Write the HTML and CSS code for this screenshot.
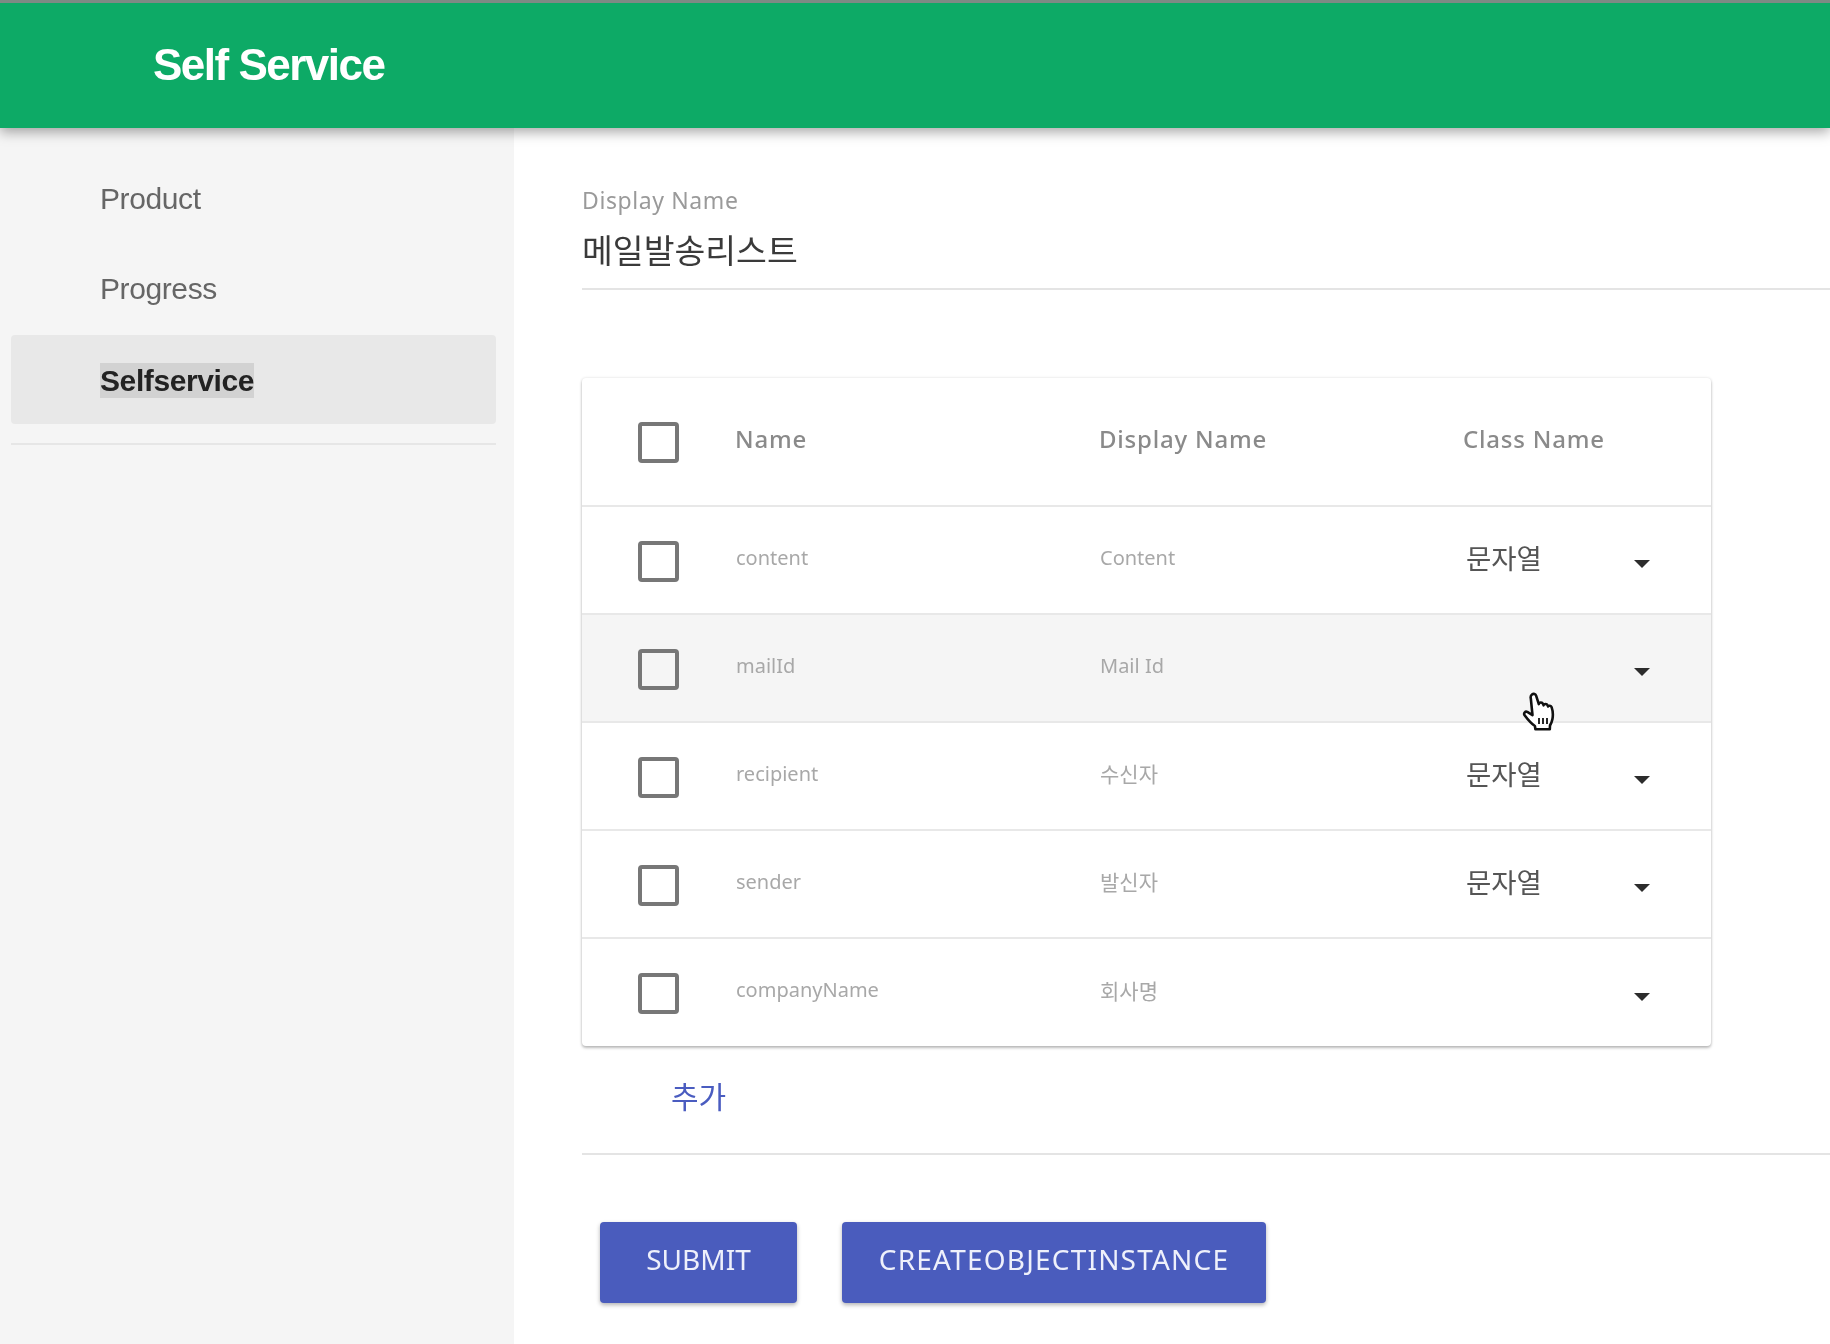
FILE: index.html
```html
<!DOCTYPE html>
<html lang="ko">
<head>
    <meta charset="UTF-8">
    <meta name="viewport" content="width=device-width, initial-scale=1.0">
    <title>Self Service</title>
    <link rel="stylesheet" href="styles.css">
</head>
<body>
    <header class="topbar">
        <div class="brand">Self Service</div>
    </header>
    <div class="layout">
        <nav class="sidebar">
            <a class="nav-item">Product</a>
            <a class="nav-item">Progress</a>
            <a class="nav-item active"><span class="selected">Selfservice</span></a>
            <div class="nav-divider"></div>
        </nav>
        <main class="content">
            <div class="field">
                <label class="field-label">Display Name</label>
                <div class="field-value">메일발송리스트</div>
            </div>
            <div class="table-card">
                <table>
                    <thead>
                        <tr>
                            <th class="col-check"><span class="check"></span></th>
                            <th class="col-name">Name</th>
                            <th class="col-display">Display Name</th>
                            <th>Class Name</th>
                        </tr>
                    </thead>
                    <tbody>
                        <tr>
                            <td><span class="check"></span></td>
                            <td>content</td>
                            <td>Content</td>
                            <td><div class="select"><span>문자열</span><i class="caret"></i></div></td>
                        </tr>
                        <tr class="hover">
                            <td><span class="check"></span></td>
                            <td>mailId</td>
                            <td>Mail Id</td>
                            <td><div class="select"><span></span><i class="caret"></i></div></td>
                        </tr>
                        <tr>
                            <td><span class="check"></span></td>
                            <td>recipient</td>
                            <td class="ko">수신자</td>
                            <td><div class="select"><span>문자열</span><i class="caret"></i></div></td>
                        </tr>
                        <tr>
                            <td><span class="check"></span></td>
                            <td>sender</td>
                            <td class="ko">발신자</td>
                            <td><div class="select"><span>문자열</span><i class="caret"></i></div></td>
                        </tr>
                        <tr>
                            <td><span class="check"></span></td>
                            <td>companyName</td>
                            <td class="ko">회사명</td>
                            <td><div class="select"><span></span><i class="caret"></i></div></td>
                        </tr>
                    </tbody>
                </table>
                <svg class="cursor" width="36" height="42" viewBox="0 0 36 42">
                    <path d="M11 3.5c1.6-1.2 3.6-.4 4.2 1.4l2.6 8.2c.2-1.800 3.400-2.200 4.200-.2l.6 1.400c.4-1.600 3.200-1.800 4 0l.5 1.200c.6-1.200 2.900-1 3.500.6 1.300 3.700 1.600 8 .8 12.200-.5 2.600-1.400 4.400-2.400 6.200l-.2 3.700H14.400l-.5-3.200c-3.500-2.400-7.300-6.800-10.300-10.800-1.300-1.800.6-4.200 2.700-3.300l5.200 3.200L9.800 7.400c-.4-1.500.1-3 1.200-3.900z" fill="#fff" stroke="#111" stroke-width="2.600" stroke-linejoin="round"/>
                    <path d="M18 27v6M22 27v6M26 27v6" stroke="#111" stroke-width="1.800" fill="none"/>
                </svg>
            </div>
            <div class="add-row"><a class="add-link">추가</a></div>
            <div class="actions">
                <button class="btn btn-submit" type="button">SUBMIT</button>
                <button class="btn btn-create" type="button">CREATEOBJECTINSTANCE</button>
            </div>
        </main>
    </div>
</body>
</html>
```

FILE: styles.css
```css
html, body {
    margin: 0;
    padding: 0;
    height: 1344px;
    overflow: hidden;
    background: #fff;
}
body {
    font-family: "Noto Sans", "Noto Sans CJK KR", sans-serif;
    filter: blur(0.5px);
}
.topbar {
    position: relative;
    z-index: 2;
    box-sizing: border-box;
    height: 128px;
    background: #0daa66;
    border-top: 3px solid #7d8a84;
    padding: 0 0 0 153px;
    box-shadow: 0 4px 12px rgba(0, 0, 0, 0.35);
}
.brand {
    font-family: "Liberation Sans", Arial, sans-serif;
    font-size: 44px;
    letter-spacing: -1.5px;
    font-weight: 700;
    color: #fff;
    line-height: 124px;
}
.layout {
    display: flex;
    height: 1216px;
}
.sidebar {
    box-sizing: border-box;
    flex: 0 0 514px;
    background: #f5f5f5;
    padding: 26px 18px 0 11px;
    font-family: "Liberation Sans", Arial, sans-serif;
}
.nav-item {
    display: flex;
    align-items: center;
    height: 90px;
    padding-left: 89px;
    font-size: 30px;
    letter-spacing: -0.4px;
    color: #666;
}
.nav-item.active {
    height: 89px;
    margin-top: 1px;
    background: #e8e8e8;
    border-radius: 4px;
    color: #222;
    font-weight: 700;
}
.selected {
    background: #d2d2d2;
    line-height: 35px;
    margin-top: 2px;
}
.nav-divider {
    height: 2px;
    margin-top: 19px;
    background: #e6e6e6;
}
.content {
    flex: 1;
    padding: 56px 0 0 68px;
}
.field {
    border-bottom: 2px solid #e4e4e4;
    height: 104px;
}
.field-label {
    display: block;
    font-size: 23px;
    letter-spacing: 0.6px;
    color: #9a9a9a;
    line-height: 32px;
}
.field-value {
    margin-top: 12px;
    font-size: 33.5px;
    color: #3a3a3a;
    line-height: 44px;
}
.table-card {
    position: relative;
    width: 1129px;
    margin-top: 88px;
    background: #fff;
    border-radius: 4px;
    box-shadow: 0 2px 3px rgba(0, 0, 0, 0.25), 0 0 3px rgba(0, 0, 0, 0.12);
}
table {
    width: 100%;
    border-collapse: collapse;
    table-layout: fixed;
}
th, td {
    box-sizing: border-box;
    text-align: left;
    vertical-align: middle;
}
th {
    height: 128px;
    padding: 0 0 7px;
    font-size: 24px;
    font-weight: 500;
    letter-spacing: 0.8px;
    color: #8a8a8a;
}
td {
    height: 108px;
    padding: 0 0 6px;
    font-size: 20px;
    color: #a8a8a8;
    border-top: 2px solid #e8e8e8;
}
td + td {
    padding-left: 1px;
}
td.ko {
    font-size: 21px;
}
.col-check {
    width: 153px;
}
.col-name, .col-display {
    width: 364px;
}
tr.hover td {
    background: #f5f5f5;
}
.check {
    display: block;
    box-sizing: border-box;
    width: 41px;
    height: 41px;
    margin: 8px 0 0 56px;
    border: 4px solid #777;
    border-radius: 4px;
}
th .check {
    margin-top: 9px;
}
.select {
    position: relative;
    display: flex;
    align-items: center;
    justify-content: space-between;
    height: 40px;
    padding: 0 61px 0 2px;
    font-size: 27.5px;
    color: #555;
}
.caret {
    display: block;
    width: 0;
    height: 0;
    margin-top: 14px;
    border-left: 8px solid transparent;
    border-right: 8px solid transparent;
    border-top: 8px solid #2c2c2c;
}
.cursor {
    position: absolute;
    left: 939px;
    top: 313px;
}
.add-row {
    height: 109px;
    box-sizing: border-box;
    padding: 27px 0 0 89px;
    border-bottom: 2px solid #e4e4e4;
}
.add-link {
    font-size: 30px;
    line-height: 48px;
    color: #4a5cc0;
}
.actions {
    display: flex;
    gap: 45px;
    padding: 67px 0 0 18px;
}
.btn {
    height: 81px;
    border: none;
    border-radius: 4px;
    background: #4a5cbd;
    color: #eef0fb;
    font-family: "Noto Sans", sans-serif;
    font-size: 28px;
    padding: 0 0 8px;
    box-shadow: 0 2px 4px rgba(0, 0, 0, 0.3);
}
.btn-submit {
    width: 197px;
}
.btn-create {
    width: 424px;
    letter-spacing: 1.2px;
}
```
